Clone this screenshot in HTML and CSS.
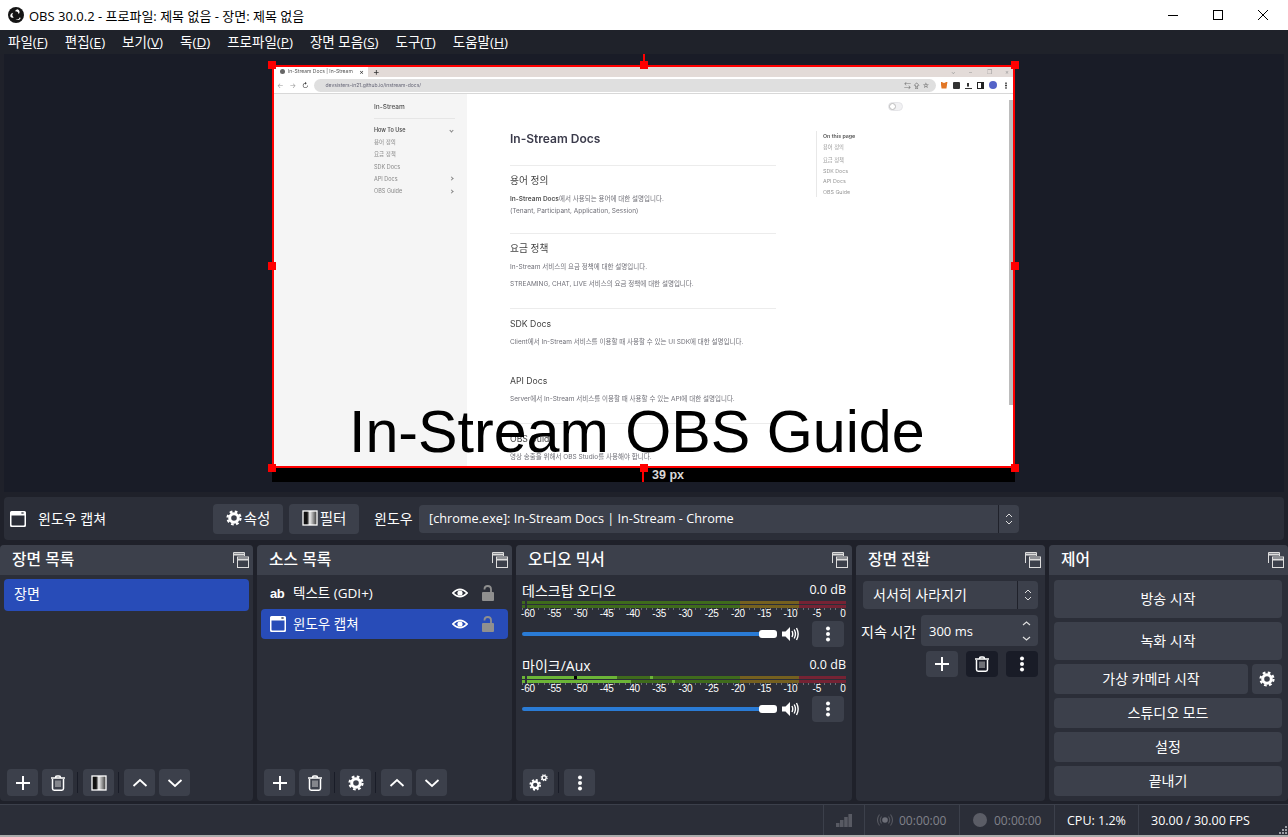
FILE: index.html
```html
<!DOCTYPE html>
<html lang="ko">
<head>
    <meta charset="UTF-8">
    <title>OBS 30.0.2 - 프로파일: 제목 없음 - 장면: 제목 없음</title>
    <link rel="stylesheet" href="styles.css">
</head>
<body>
    <!-- icon set -->
    <svg class="defs" width="0" height="0">
        <defs>
            <linearGradient id="fade"><stop offset="0.3" stop-color="#111"/><stop offset="0.48" stop-color="#eee"/><stop offset="1" stop-color="#333"/></linearGradient>
        </defs>
        <symbol id="i-plus" viewBox="0 0 16 16"><path d="M8 1v14M1 8h14" stroke="#fff" stroke-width="2" fill="none"/></symbol>
        <symbol id="i-trash" viewBox="0 0 16 16"><path d="M1 3h14M5.500 2.500q0-1.500 1.500-1.500h2q1.500 0 1.500 1.500M2.500 4v9.500q0 1.700 1.700 1.700h7.600q1.700 0 1.700-1.700V4" stroke="#fff" stroke-width="1.500" fill="none"/><path d="M6 5.500v6.500M8 5.500v6.500M10 5.500v6.500" stroke="#ddd" stroke-width="0.900"/></symbol>
        <symbol id="i-gear" viewBox="0 0 16 16"><circle cx="8" cy="8" r="4.300" stroke="#fff" stroke-width="3" fill="none"/><circle cx="8" cy="8" r="6.500" stroke="#fff" stroke-width="2.200" stroke-dasharray="2.700 2.405" fill="none"/></symbol>
        <symbol id="i-up" viewBox="0 0 16 16"><path d="M1.500 11L8 5l6.500 6" stroke="#fff" stroke-width="1.800" fill="none"/></symbol>
        <symbol id="i-down" viewBox="0 0 16 16"><path d="M1.500 5L8 11l6.500-6" stroke="#fff" stroke-width="1.800" fill="none"/></symbol>
        <symbol id="i-dots" viewBox="0 0 16 16"><circle cx="8" cy="2.500" r="2"/><circle cx="8" cy="8" r="2"/><circle cx="8" cy="13.500" r="2"/></symbol>
        <symbol id="i-filter" viewBox="0 0 16 16"><rect x="1" y="1" width="14" height="14" fill="url(#fade)" stroke="#fff" stroke-width="1.300"/></symbol>
        <symbol id="i-window" viewBox="0 0 16 16"><path fill-rule="evenodd" d="M1.500 0h13Q16 0 16 1.500v13q0 1.500-1.500 1.500h-13Q0 16 0 14.500v-13Q0 0 1.500 0zM1.500 4.500v9q0 1 1 1h11q1 0 1-1v-9z"/><path d="M11.500 1l2 2M13.500 1l-2 2" stroke="#2b2e38" stroke-width="0.800"/></symbol>
        <symbol id="i-eye" viewBox="0 0 16 16"><path d="M0.800 8Q8 0.800 15.200 8Q8 15.200 0.800 8z" fill="none" stroke="#fff" stroke-width="1.700"/><circle cx="8" cy="8" r="2.600" fill="#fff"/></symbol>
        <symbol id="i-lock" viewBox="0 0 16 16"><rect x="2" y="7" width="12" height="9" rx="1" fill="#8f8f8f"/><path d="M4.500 4.500V4q0-3 3.200-3t3.300 3v3" fill="none" stroke="#8f8f8f" stroke-width="1.800"/></symbol>
        <symbol id="i-speaker" viewBox="0 0 18 16"><path d="M0 5.500h3.500L8 1v14l-4.500-4.500H0z" fill="#fff"/><path d="M10 5q1.500 3 0 6M12.200 3.500q2.500 4.500 0 9M14.500 2q3.300 6 0 12" fill="none" stroke="#fff" stroke-width="1.400"/></symbol>
        <symbol id="i-float" viewBox="0 0 16 16"><path d="M0.500 11V0.500h11V4" fill="none" stroke="#ddd"/><path d="M0.500 2.500h11" stroke="#ddd" stroke-width="2"/><rect x="4.500" y="5" width="11" height="10.500" fill="#3c404b" stroke="#ddd"/><path d="M4.500 7.500h11" stroke="#ddd" stroke-width="2"/></symbol>
        <symbol id="i-gears" viewBox="0 0 20 18"><use href="#i-gear" x="0" y="5" width="13" height="13"/><use href="#i-gear" x="12" y="0" width="8" height="8"/></symbol>
    </svg>

    <div class="app">
        <!-- title bar -->
        <header class="titlebar">
            <svg class="logo" viewBox="0 0 16 16" width="16" height="16">
                <circle cx="8" cy="8" r="8" fill="#151515"/>
                <circle cx="8" cy="8" r="1.800" fill="#151515"/>
                <path d="M9.500 2.200a3 3 0 0 1 1.200 5A3.400 3.400 0 0 0 7 4.300a3 3 0 0 1 2.500-2.100zM2.600 10a3 3 0 0 1 2.600-4.300 3.400 3.400 0 0 0 .5 4.700 3 3 0 0 1-3.100-.4zM12.600 11.200a3 3 0 0 1-5 .9 3.400 3.400 0 0 0 4.300-1.900 3 3 0 0 1 .7 1z" fill="#fff"/>
            </svg>
            <span class="title-text">OBS 30.0.2 - 프로파일: 제목 없음 - 장면: 제목 없음</span>
            <div class="win-btns">
                <svg viewBox="0 0 10 10" width="10" height="10"><path d="M0 5.500h10" stroke="#000"/></svg>
                <svg viewBox="0 0 10 10" width="10" height="10"><rect x="0.500" y="0.500" width="9" height="9" fill="none" stroke="#000"/></svg>
                <svg viewBox="0 0 10 10" width="10" height="10"><path d="M0 0l10 10M10 0L0 10" stroke="#000"/></svg>
            </div>
        </header>

        <nav class="menubar">
            <span>파일(<u>F</u>)</span>
            <span>편집(<u>E</u>)</span>
            <span>보기(<u>V</u>)</span>
            <span>독(<u>D</u>)</span>
            <span>프로파일(<u>P</u>)</span>
            <span>장면 모음(<u>S</u>)</span>
            <span>도구(<u>T</u>)</span>
            <span>도움말(<u>H</u>)</span>
        </nav>

        <!-- preview canvas -->
        <section class="preview">
            <div class="rot-line"></div>
            <div class="source">
                <div class="screen">
                    <div class="tabstrip">
                        <div class="tab"><i class="tab-globe"></i><span>In-Stream Docs | In-Stream</span><b>×</b></div>
                        <span class="tab-new">+</span>
                        <div class="chrome-win"><i>⌄</i><i>–</i><i>❐</i><i>×</i></div>
                    </div>
                    <div class="urlbar">
                        <span class="nav-ico">←</span><span class="nav-ico">→</span><span class="nav-ico dark">↻</span>
                        <div class="omnibox"><span>devsisters-in21.github.io/instream-docs/</span><em>⇆ ⇪ ☆</em></div>
                        <div class="ext">
                            <i class="ext-fox"></i><i class="ext-puzzle"></i><i class="ext-dl"></i><i class="ext-panel"></i><i class="ext-avatar"></i><i class="ext-more"></i>
                        </div>
                    </div>
                    <div class="docpage">
                        <aside class="doc-side">
                            <div class="doc-brand">In-Stream</div>
                            <ul>
                                <li class="on">How To Use<i class="chev down"></i></li>
                                <li>용어 정의</li>
                                <li>요금 정책</li>
                                <li>SDK Docs</li>
                                <li>API Docs<i class="chev"></i></li>
                                <li>OBS Guide<i class="chev"></i></li>
                            </ul>
                        </aside>
                        <main class="doc-main">
                            <h1>In-Stream Docs</h1>
                            <div class="doc-sec s1">
                                <h2 class="ko">용어 정의</h2>
                                <p><b>In-Stream Docs</b>에서 사용되는 용어에 대한 설명입니다.</p>
                                <p class="tight">(Tenant, Participant, Application, Session)</p>
                            </div>
                            <div class="doc-sec s2">
                                <h2 class="ko">요금 정책</h2>
                                <p>In-Stream 서비스의 요금 정책에 대한 설명입니다.</p>
                                <p class="wide">STREAMING, CHAT, LIVE 서비스의 요금 정책에 대한 설명입니다.</p>
                            </div>
                            <div class="doc-sec s3">
                                <h2>SDK Docs</h2>
                                <p>Client에서 In-Stream 서비스를 이용할 때 사용할 수 있는 UI SDK에 대한 설명입니다.</p>
                                <h2 class="next">API Docs</h2>
                                <p>Server에서 In-Stream 서비스를 이용할 때 사용할 수 있는 API에 대한 설명입니다.</p>
                            </div>
                            <div class="doc-sec">
                                <h2>OBS Guide</h2>
                                <p>영상 송출을 위해서 OBS Studio를 사용해야 합니다.</p>
                            </div>
                        </main>
                        <div class="doc-toggle"><i></i></div>
                        <div class="doc-toc">
                            <strong>On this page</strong>
                            <span>용어 정의</span>
                            <span>요금 정책</span>
                            <span>SDK Docs</span>
                            <span>API Docs</span>
                            <span>OBS Guide</span>
                        </div>
                        <div class="doc-scroll"></div>
                    </div>
                </div>
                <div class="overlay-text">In-Stream OBS Guide</div>
                <div class="strip"><div class="guide"></div><span>39 px</span></div>
                <div class="sel">
                    <i class="h tl"></i><i class="h tc"></i><i class="h tr"></i>
                    <i class="h ml"></i><i class="h mr"></i>
                    <i class="h bl"></i><i class="h bc"></i><i class="h br"></i>
                </div>
            </div>
        </section>

        <!-- context bar -->
        <section class="context">
            <svg class="ico ctx-ico"><use href="#i-window"/></svg>
            <span class="ctx-name">윈도우 캡쳐</span>
            <button class="btn ctx-btn"><svg class="ico"><use href="#i-gear"/></svg>속성</button>
            <button class="btn ctx-btn"><svg class="ico"><use href="#i-filter"/></svg>필터</button>
            <label class="ctx-label">윈도우</label>
            <div class="combo ctx-combo">
                <span>[chrome.exe]: In-Stream Docs | In-Stream - Chrome</span>
                <div class="combo-arrows"><svg viewBox="0 0 8 14" width="8" height="14"><path d="M1 5l3-3 3 3M1 9l3 3 3-3" fill="none" stroke="#ddd"/></svg></div>
            </div>
        </section>

        <!-- docks -->
        <section class="docks">
            <div class="dock d-scenes">
                <div class="dock-head"><h3>장면 목록</h3><svg class="ico"><use href="#i-float"/></svg></div>
                <div class="scene-list"><div class="row selected">장면</div></div>
                <div class="tools">
                    <button class="tool"><svg class="ico"><use href="#i-plus"/></svg></button>
                    <button class="tool"><svg class="ico"><use href="#i-trash"/></svg></button>
                    <i class="tool-sep"></i>
                    <button class="tool"><svg class="ico"><use href="#i-filter"/></svg></button>
                    <i class="tool-sep"></i>
                    <button class="tool"><svg class="ico"><use href="#i-up"/></svg></button>
                    <button class="tool"><svg class="ico"><use href="#i-down"/></svg></button>
                </div>
            </div>

            <div class="dock d-sources">
                <div class="dock-head"><h3>소스 목록</h3><svg class="ico"><use href="#i-float"/></svg></div>
                <div class="source-list">
                    <div class="src-row">
                        <span class="ab-ico">ab</span><span class="src-name">텍스트 (GDI+)</span>
                        <svg class="ico"><use href="#i-eye"/></svg><svg class="ico lock"><use href="#i-lock"/></svg>
                    </div>
                    <div class="src-row selected">
                        <svg class="ico win-ico"><use href="#i-window"/></svg><span class="src-name">윈도우 캡쳐</span>
                        <svg class="ico"><use href="#i-eye"/></svg><svg class="ico lock"><use href="#i-lock"/></svg>
                    </div>
                </div>
                <div class="tools">
                    <button class="tool"><svg class="ico"><use href="#i-plus"/></svg></button>
                    <button class="tool"><svg class="ico"><use href="#i-trash"/></svg></button>
                    <i class="tool-sep"></i>
                    <button class="tool"><svg class="ico"><use href="#i-gear"/></svg></button>
                    <i class="tool-sep"></i>
                    <button class="tool"><svg class="ico"><use href="#i-up"/></svg></button>
                    <button class="tool"><svg class="ico"><use href="#i-down"/></svg></button>
                </div>
            </div>

            <div class="dock d-audio">
                <div class="dock-head"><h3>오디오 믹서</h3><svg class="ico"><use href="#i-float"/></svg></div>
                <div class="mixer">
                    <div class="strip-audio">
                        <div class="ch-name"><span>데스크탑 오디오</span><span class="db">0.0 dB</span></div>
                        <div class="meter">
                            <div class="chan"><i class="lv g pre"></i><i class="lv gap"></i><i class="lv g grow"></i><i class="lv y"></i><i class="lv r"></i></div>
                            <div class="chan"><i class="lv g pre"></i><i class="lv gap"></i><i class="lv g grow"></i><i class="lv y"></i><i class="lv r"></i></div>
                        </div>
                        <div class="ticks"></div>
                        <div class="scale"><span>-60</span><span>-55</span><span>-50</span><span>-45</span><span>-40</span><span>-35</span><span>-30</span><span>-25</span><span>-20</span><span>-15</span><span>-10</span><span>-5</span><span>0</span></div>
                        <div class="vol">
                            <div class="slider"><i></i></div>
                            <svg class="speaker"><use href="#i-speaker"/></svg>
                            <button class="tool small"><svg class="ico"><use href="#i-dots"/></svg></button>
                        </div>
                    </div>
                    <div class="strip-audio">
                        <div class="ch-name"><span>마이크/Aux</span><span class="db">0.0 dB</span></div>
                        <div class="meter">
                            <div class="chan"><i class="lv on pre"></i><i class="lv gap"></i><i class="lv on" style="width:47px"></i><i class="lv blk" style="width:3px"></i><i class="lv on" style="width:40px"></i><i class="lv g" style="width:33px"></i><i class="lv on" style="width:3px"></i><i class="lv g grow"></i><i class="lv y"></i><i class="lv r"></i></div>
                            <div class="chan"><i class="lv on pre"></i><i class="lv gap"></i><i class="lv on" style="width:104px"></i><i class="lv g" style="width:41px"></i><i class="lv on" style="width:3px"></i><i class="lv g grow"></i><i class="lv y"></i><i class="lv r"></i></div>
                        </div>
                        <div class="ticks"></div>
                        <div class="scale"><span>-60</span><span>-55</span><span>-50</span><span>-45</span><span>-40</span><span>-35</span><span>-30</span><span>-25</span><span>-20</span><span>-15</span><span>-10</span><span>-5</span><span>0</span></div>
                        <div class="vol">
                            <div class="slider"><i></i></div>
                            <svg class="speaker"><use href="#i-speaker"/></svg>
                            <button class="tool small"><svg class="ico"><use href="#i-dots"/></svg></button>
                        </div>
                    </div>
                </div>
                <div class="tools">
                    <button class="tool"><svg class="ico gears" viewBox="0 0 20 18"><use href="#i-gears"/></svg></button>
                    <i class="tool-sep"></i>
                    <button class="tool"><svg class="ico"><use href="#i-dots"/></svg></button>
                </div>
            </div>

            <div class="dock d-trans">
                <div class="dock-head"><h3>장면 전환</h3><svg class="ico"><use href="#i-float"/></svg></div>
                <div class="trans-body">
                    <div class="combo trans-combo">
                        <span>서서히 사라지기</span>
                        <div class="combo-arrows"><svg viewBox="0 0 8 14" width="8" height="14"><path d="M1 5l3-3 3 3M1 9l3 3 3-3" fill="none" stroke="#ddd"/></svg></div>
                    </div>
                    <div class="duration">
                        <label>지속 시간</label>
                        <div class="spin"><span>300 ms</span><svg viewBox="0 0 9 22" width="9" height="22"><path d="M1 5l3.500-3L8 5M1 17l3.500 3L8 17" fill="none" stroke="#ddd" stroke-width="1.200"/></svg></div>
                    </div>
                    <div class="trans-btns">
                        <button class="tool"><svg class="ico"><use href="#i-plus"/></svg></button>
                        <button class="tool dim"><svg class="ico"><use href="#i-trash"/></svg></button>
                        <button class="tool dim"><svg class="ico"><use href="#i-dots"/></svg></button>
                    </div>
                </div>
            </div>

            <div class="dock d-controls">
                <div class="dock-head"><h3>제어</h3><svg class="ico"><use href="#i-float"/></svg></div>
                <div class="controls">
                    <button class="btn tall">방송 시작</button>
                    <button class="btn tall">녹화 시작</button>
                    <div class="cam-row">
                        <button class="btn">가상 카메라 시작</button>
                        <button class="btn cam-gear"><svg class="ico"><use href="#i-gear"/></svg></button>
                    </div>
                    <button class="btn">스튜디오 모드</button>
                    <button class="btn">설정</button>
                    <button class="btn">끝내기</button>
                </div>
            </div>
        </section>

        <!-- status bar -->
        <footer class="status">
            <div class="cell c-signal">
                <svg viewBox="0 0 16 14" width="16" height="14"><path d="M0 10h3.500v4H0zM4 7h3.500v7H4zM8.200 4h3.500v10H8.200zM12.400 1H16v13h-3.600z" fill="#585a63"/></svg>
            </div>
            <div class="cell c-time">
                <svg viewBox="0 0 16 14" width="16" height="14"><circle cx="8" cy="7" r="2.800" fill="#6d6f78"/><path d="M4.500 3.500q-2.500 3.500 0 7M11.500 3.500q2.500 3.500 0 7M2.500 1.500q-4 5.500 0 11M13.500 1.500q4 5.500 0 11" fill="none" stroke="#55575f" stroke-width="1.100"/></svg>
                <span>00:00:00</span>
            </div>
            <div class="cell c-time">
                <i class="rec-dot"></i>
                <span>00:00:00</span>
            </div>
            <div class="cell c-cpu">CPU: 1.2%</div>
            <div class="cell c-fps">30.00 / 30.00 FPS</div>
            <svg class="grip" viewBox="0 0 8 8" width="8" height="8"><path d="M6 0h2v2H6zM3 3h2v2H3zM6 3h2v2H6zM0 6h2v2H0zM3 6h2v2H3zM6 6h2v2H6z" fill="#9a9ca3"/></svg>
        </footer>
    </div>
</body>
</html>
```

FILE: styles.css
```css
* {
    box-sizing: border-box;
}

body, html {
    margin: 0;
    padding: 0;
    width: 100%;
    height: 100%;
    overflow: hidden;
    font-family: "Open Sans", "Noto Sans CJK KR", sans-serif;
    font-size: 14px;
    color: #fefefe;
    background: #1f212a;
}

.defs {
    display: block;
    height: 0;
}

.ico {
    width: 16px;
    height: 16px;
    flex: none;
    fill: #fff;
}

.app {
    width: 1288px;
    height: 837px;
    display: flex;
    flex-direction: column;
    border-bottom: 2px solid #ababab;
}

/* title bar */
.titlebar {
    height: 30px;
    flex: none;
    background: #fff;
    color: #000;
    display: flex;
    align-items: center;
    padding-left: 8px;
    font-size: 13px;
}

.logo {
    margin-right: 5px;
}

.title-text {
    flex: 1;
}

.win-btns {
    display: flex;
    gap: 35px;
    padding-right: 20px;
    margin-top: -1px;
}

.win-btns svg {
    display: block;
}

.menubar {
    height: 24px;
    flex: none;
    background: #1f222a;
    display: flex;
    align-items: center;
    gap: 17px;
    padding: 0 0 2px 8px;
    font-size: 13.500px;
    white-space: nowrap;
}

/* preview */
.preview {
    position: relative;
    height: 438px;
    flex: none;
    margin: 0 4px;
    background: #191c27;
}

.rot-line {
    position: absolute;
    left: 639px;
    top: 0;
    width: 2px;
    height: 8px;
    background: #f00;
}

.source {
    position: absolute;
    left: 268px;
    top: 11px;
    width: 743px;
    height: 402px;
}

.screen {
    width: 100%;
    height: 100%;
    overflow: hidden;
    background: #fff;
    color: #555;
    display: flex;
    flex-direction: column;
    font-family: Inter, "Noto Sans CJK KR", sans-serif;
    filter: blur(0.25px);
}

.tabstrip {
    height: 12px;
    flex: none;
    background: #e3dbd8;
    display: flex;
    align-items: center;
    font-size: 5px;
    padding-left: 2px;
}

.tab {
    width: 94px;
    height: 12px;
    background: #fff;
    display: flex;
    align-items: center;
    padding: 0 4px 0 6px;
    gap: 3px;
    white-space: nowrap;
}

.tab span {
    flex: 1;
}

.tab b {
    font-size: 7px;
    font-weight: 400;
    color: #333;
}

.tab-globe {
    width: 5px;
    height: 5px;
    border-radius: 50%;
    background: #666;
}

.tab-new {
    margin-left: 5px;
    font-size: 10px;
    color: #333;
    line-height: 12px;
}

.chrome-win {
    margin-left: auto;
    margin-right: 3px;
    display: flex;
    gap: 11px;
    font-size: 6px;
    color: #999;
}

.chrome-win i {
    width: 7px;
    font-style: normal;
}

.urlbar {
    height: 17px;
    flex: none;
    background: #fff;
    border-bottom: 1px solid #d8d8d8;
    display: flex;
    align-items: center;
    padding-left: 2px;
    font-size: 7px;
    color: #999;
}

.nav-ico {
    width: 12.500px;
    text-align: center;
}

.nav-ico.dark {
    color: #333;
}

.omnibox {
    width: 622px;
    height: 13px;
    margin-left: 2px;
    background: #dfdfdf;
    border-radius: 7px;
    display: flex;
    align-items: center;
    justify-content: space-between;
    padding: 0 6px 0 12px;
    font-size: 5px;
    color: #667;
}

.omnibox em {
    font-style: normal;
    font-size: 7px;
    color: #777;
}

.ext {
    display: flex;
    align-items: center;
    gap: 5px;
    margin-left: 5px;
}

.ext i {
    display: block;
    width: 7px;
    height: 7px;
}

.ext-fox { background: #e27625; clip-path: polygon(0 0, 50% 20%, 100% 0, 85% 100%, 15% 100%); }
.ext-puzzle { background: #333; border-radius: 1px; }
.ext-dl { border-bottom: 1px solid #333; background: linear-gradient(#333, #333) center / 2px 60% no-repeat; }
.ext-panel { border: 1.500px solid #222; border-right-width: 3px; }
.ext .ext-avatar { width: 8px; height: 8px; background: #5563c8; border-radius: 50%; }
.ext .ext-more { width: 2px; height: 7px; background: radial-gradient(circle, #333 0.800px, transparent 1px) 0 0 / 2px 2.400px; margin-left: 3px; }

.docpage {
    flex: 1;
    position: relative;
    display: flex;
    min-height: 0;
}

.doc-side {
    width: 195px;
    flex: none;
    background: #f5f5f5;
    padding: 7px 12px 0 102px;
    font-size: 5.500px;
}

.doc-brand {
    font-size: 6.500px;
    font-weight: 500;
    height: 18px;
    line-height: 12px;
    border-bottom: 1px solid #e6e6e6;
}

.doc-side ul {
    list-style: none;
    margin: 5px 0 0;
    padding: 0;
}

.doc-side li {
    height: 12.200px;
    line-height: 12.200px;
    color: #888;
    display: flex;
    justify-content: space-between;
    align-items: center;
}

.doc-side li.on {
    color: #555;
    font-weight: 600;
}

.chev {
    width: 3px;
    height: 3px;
    border-top: 0.700px solid #888;
    border-right: 0.700px solid #888;
    transform: rotate(45deg);
    margin-right: 2px;
}

.chev.down {
    transform: rotate(135deg);
}

.doc-main {
    width: 309px;
    flex: none;
    padding: 37px 0 0 43px;
}

.doc-main h1 {
    margin: 0;
    height: 34px;
    font-size: 12px;
    line-height: 16px;
    font-weight: 600;
    color: #3b3b4b;
}

.doc-sec {
    border-top: 1px solid #ececec;
    padding-top: 9px;
}

.doc-sec.s1 { height: 68px; }
.doc-sec.s2 { height: 75px; }
.doc-sec.s3 { height: 115px; }

.doc-sec h2 {
    margin: 0;
    font-size: 8.700px;
    line-height: 12px;
    font-weight: 400;
    color: #444;
}

.doc-sec h2.ko {
    font-size: 9.700px;
}

.doc-sec h2.next {
    margin-top: 27px;
}

.doc-sec p {
    margin: 6px 0 0;
    font-size: 6.500px;
    line-height: 12px;
    color: #707078;
    white-space: nowrap;
}

.doc-sec p b {
    font-weight: 600;
    color: #555;
}

.doc-sec p.tight {
    margin-top: 0;
}

.doc-sec p.wide {
    margin-top: 5px;
}

.doc-toggle {
    position: absolute;
    left: 616px;
    top: 8px;
    width: 15px;
    height: 9px;
    border-radius: 5px;
    background: #f1f1f3;
    border: 1px solid #e5e5e8;
}

.doc-toggle i {
    display: block;
    width: 7px;
    height: 7px;
    border-radius: 50%;
    background: #fff;
    border: 1px solid #bbb;
}

.doc-toc {
    position: absolute;
    left: 544px;
    top: 37px;
    height: 66px;
    border-left: 1px solid #e8e8e8;
    padding-left: 6px;
    display: flex;
    flex-direction: column;
    justify-content: space-around;
    font-size: 5.300px;
    color: #999;
}

.doc-toc strong {
    color: #555;
    font-weight: 600;
}

.doc-scroll {
    position: absolute;
    right: 2px;
    top: 6px;
    width: 4px;
    height: 305px;
    background: #bcbcbc;
}

.overlay-text {
    position: absolute;
    left: 77px;
    top: 332px;
    font-family: "Liberation Sans", Arial, sans-serif;
    font-size: 59.200px;
    line-height: 70px;
    color: #000;
    white-space: nowrap;
}

.strip {
    position: absolute;
    left: 0;
    top: 402px;
    width: 743px;
    height: 15px;
    background: #000;
    display: flex;
    align-items: center;
    padding-left: 380px;
    font-family: "Liberation Sans", Arial, sans-serif;
    font-size: 12.500px;
    font-weight: 700;
    color: #d8d8d8;
}

.guide {
    position: absolute;
    left: 370px;
    top: 0;
    width: 2px;
    height: 15px;
    background: #f00;
}

.sel {
    position: absolute;
    left: 0;
    top: 0;
    width: 743px;
    height: 403px;
    border: 2px solid #f00;
}

.h {
    position: absolute;
    width: 8px;
    height: 8px;
    background: #f00;
}

.tl { left: -6px; top: -6px; }
.tc { left: 366px; top: -6px; }
.tr { right: -6px; top: -6px; }
.ml { left: -6px; top: 195px; }
.mr { right: -6px; top: 195px; }
.bl { left: -6px; bottom: -6px; }
.bc { left: 366px; bottom: -6px; }
.br { right: -6px; bottom: -6px; }

/* context bar */
.context {
    height: 43px;
    flex: none;
    margin: 5px 4px 0;
    padding-left: 6px;
    background: #2b2e38;
    border-radius: 4px;
    display: flex;
    align-items: center;
}

.ctx-ico {
    margin-right: 12px;
}

.ctx-name {
    width: 175px;
    margin-top: -2px;
}

.btn {
    height: 30px;
    border: none;
    border-radius: 4px;
    background: #3c404b;
    color: #fefefe;
    font: inherit;
    display: flex;
    align-items: center;
    justify-content: center;
    padding: 0 0 3px;
}

.ctx-btn {
    width: 70px;
    margin-right: 6px;
    gap: 2px;
    font-size: 14.500px;
}

.ctx-btn .ico {
    margin-top: 2px;
}

.ctx-label {
    width: 45px;
    margin: -2px 0 0 9px;
}

.combo {
    height: 28px;
    background: #3c404b;
    border-radius: 4px;
    display: flex;
    align-items: center;
    padding-left: 10px;
    white-space: nowrap;
}

.combo span {
    flex: 1;
    padding-bottom: 2px;
}

.ctx-combo {
    width: 600px;
    font-size: 12.700px;
}

.combo-arrows {
    width: 21px;
    height: 100%;
    border-left: 1px solid #1f212a;
    display: flex;
    align-items: center;
    justify-content: center;
}

/* docks */
.docks {
    height: 256px;
    flex: none;
    margin-top: 5px;
    display: flex;
    gap: 4px;
}

.dock {
    flex: none;
    display: flex;
    flex-direction: column;
    background: #2b2e38;
    border-radius: 4px;
    overflow: hidden;
}

.d-scenes { width: 253px; }
.d-sources { width: 255px; }
.d-audio { width: 336px; }
.d-trans { width: 189px; }
.d-controls { width: 239px; }

.dock-head {
    height: 30px;
    flex: none;
    background: #3c404b;
    display: flex;
    align-items: center;
    justify-content: space-between;
    padding: 0 4px 0 12px;
}

.dock-head h3 {
    margin: -3px 0 0;
    font-size: 15.800px;
    font-weight: 500;
}

.scene-list {
    padding: 4px;
    flex: 1;
}

.row {
    height: 32px;
    line-height: 30px;
    padding-left: 10px;
    border-radius: 4px;
}

.selected {
    background: #284cb8;
}

.source-list {
    padding: 3px 4px;
    flex: 1;
}

.src-row {
    height: 30px;
    margin-bottom: 1px;
    border-radius: 4px;
    display: flex;
    align-items: center;
    padding: 0 12px 0 9px;
}

.src-name {
    flex: 1;
    margin-left: 7px;
    padding-bottom: 2px;
    font-size: 13.500px;
}

.ab-ico {
    width: 16px;
    font-family: "Liberation Sans", Arial, sans-serif;
    font-size: 13px;
    font-weight: 700;
    letter-spacing: -0.500px;
}

.lock {
    margin-left: 12px;
}

.tools {
    height: 32px;
    flex: none;
    display: flex;
    align-items: flex-start;
    padding-left: 7px;
    gap: 4px;
}

.tool {
    width: 31px;
    height: 27px;
    flex: none;
    border: none;
    border-radius: 4px;
    background: #3c404b;
    display: flex;
    align-items: center;
    justify-content: center;
    padding: 0;
}

.tool.small {
    width: 32px;
    height: 26px;
    margin-left: 12px;
}

.tool.dim {
    background: #191c27;
    width: 32px;
    height: 26px;
}

.tool-sep {
    width: 1px;
    height: 21px;
    margin: 3px 1px 0 0;
    background: #191c27;
}

.gears {
    width: 19px;
    height: 17px;
}

/* mixer */
.mixer {
    flex: 1;
    padding: 3px 6px 0;
}

.strip-audio {
    height: 75px;
}

.ch-name {
    height: 23px;
    display: flex;
    justify-content: space-between;
    align-items: center;
}

.db {
    font-size: 12.500px;
}

.meter {
    width: 324px;
}

.chan {
    height: 3px;
    margin-bottom: 1px;
    display: flex;
}

.chan:last-child {
    margin-bottom: 0;
}

.lv {
    display: block;
    flex: none;
    height: 3px;
}

.lv.pre { width: 3px; }
.lv.gap { width: 2px; }
.lv.grow { flex: 1; }
.lv.g { background: #3f6b1c; }
.lv.y { width: 59px; background: #75601f; }
.lv.r { width: 47px; background: #752334; }
.lv.on { background: #6cb537; }
.lv.blk { background: #000; }

.ticks {
    width: 324px;
    height: 2px;
    background: repeating-linear-gradient(90deg, #6d6f78 0, #6d6f78 1px, transparent 1px, transparent 5.400px);
}

.scale {
    width: 329px;
    height: 12px;
    margin: -1px 0 0 -1px;
    display: flex;
    justify-content: space-between;
    font-family: "Liberation Sans", Arial, sans-serif;
    font-size: 10px;
    line-height: 10px;
}

.scale span {
    width: 14px;
    text-align: center;
    letter-spacing: -0.200px;
}

.vol {
    height: 26px;
    display: flex;
    align-items: center;
}

.slider {
    width: 255px;
    height: 4px;
    background: #2a7bd5;
    border-radius: 2px;
    display: flex;
    justify-content: flex-end;
    align-items: center;
}

.slider i {
    display: block;
    width: 18px;
    height: 8px;
    background: #fff;
    border-radius: 3px;
}

.speaker {
    width: 18px;
    height: 16px;
    flex: none;
    margin-left: 5px;
}

/* transitions */
.trans-body {
    padding: 6px 7px 0;
}

.trans-combo {
    width: 175px;
}

.duration {
    display: flex;
    align-items: center;
    margin: 6px 0 0 -2px;
    justify-content: space-between;
}

.spin {
    width: 117px;
    height: 31px;
    background: #3c404b;
    border-radius: 4px;
    display: flex;
    align-items: center;
    justify-content: space-between;
    padding: 0 7px 0 8px;
    font-size: 13px;
    color: #fefefe;
}

.trans-btns {
    display: flex;
    justify-content: flex-end;
    gap: 8px;
    margin-top: 5px;
}

.trans-btns .tool {
    width: 32px;
    height: 26px;
}

/* controls */
.controls {
    padding: 5px 6px 0 5px;
    display: flex;
    flex-direction: column;
    gap: 4px;
}

.btn.tall {
    height: 38px;
}

.cam-row {
    display: flex;
    gap: 4px;
}

.cam-row .btn {
    flex: 1;
}

.cam-row .cam-gear {
    flex: none;
    width: 30px;
    padding: 0;
}

/* status bar */
.status {
    position: relative;
    flex: 1;
    margin-top: 3px;
    background: #2b2e38;
    border-top: 1px solid #3c404b;
    display: flex;
    justify-content: flex-end;
    white-space: nowrap;
    font-size: 12.500px;
}

.cell {
    height: 100%;
    border-left: 1px solid #3c404b;
    display: flex;
    align-items: center;
}

.c-signal {
    width: 41px;
    padding-left: 12px;
}

.c-time {
    width: 95px;
    padding-left: 12px;
    gap: 6px;
    font-size: 12px;
    color: #80828a;
}

.rec-dot {
    width: 14px;
    height: 14px;
    margin: 0 1px;
    border-radius: 50%;
    background: #5b5d66;
}

.c-cpu {
    width: 84px;
    padding-left: 12px;
}

.c-fps {
    width: 150px;
    padding-left: 12px;
}

.grip {
    position: absolute;
    right: 1px;
    bottom: 1px;
}
```
